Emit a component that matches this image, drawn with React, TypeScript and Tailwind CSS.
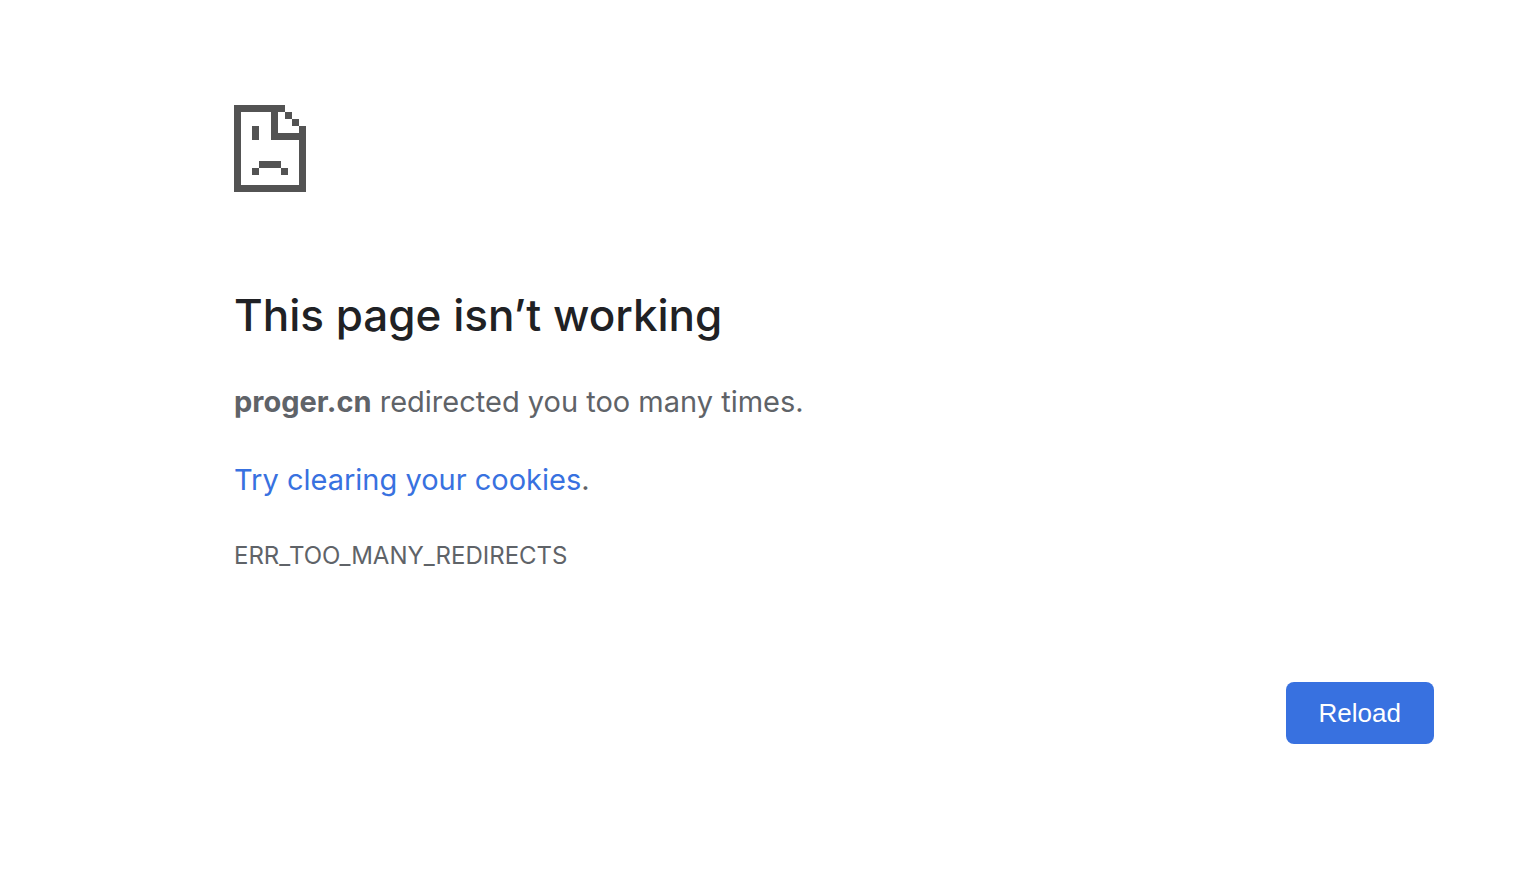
export default function App() {
  return (
    <main className="min-h-screen bg-white pt-[105px] font-[Inter,sans-serif] text-[#5f6368]">
      <div className="mx-auto w-full max-w-[1340px] pl-[140px]">
        <svg
          className="h-[87px] w-[72px]"
          viewBox="0 0 72 87"
          fill="#535353"
          shapeRendering="crispEdges"
          role="img"
          aria-label="Sad page"
        >
          <path d="M0 0h51v7H7v73h58V35H37V7h7v21h21v-7h7v66H0z" />
          <path d="M51 7h7v7h-7zM58 14h7v7h-7z" />
          <path d="M18 21h7v14h-7zM25 56h22v7H25zM18 63h7v7h-7zM47 63h7v7h-7z" />
        </svg>
        <h1 className="mt-[91px] text-[44px] leading-[64px] font-medium text-[#202124]">
          This page isn’t working
        </h1>
        <p className="mt-[31px] text-[29px] leading-[48px]">
          <strong className="font-bold">proger.cn</strong> redirected you too many times.
        </p>
        <p className="mt-[30px] text-[29px] leading-[48px]">
          <a href="#cookies" className="text-[#3871e0]">Try clearing your cookies</a>.
        </p>
        <p className="mt-8 text-[24px] leading-[40px]">ERR_TOO_MANY_REDIRECTS</p>
        <div className="mt-[106px] flex justify-end">
          <button
            type="button"
            className="rounded-lg bg-[#3871e0] px-[33px] py-[15px] font-['Liberation_Sans',sans-serif] text-[26px] leading-[32px] text-white"
          >
            Reload
          </button>
        </div>
      </div>
    </main>
  );
}
